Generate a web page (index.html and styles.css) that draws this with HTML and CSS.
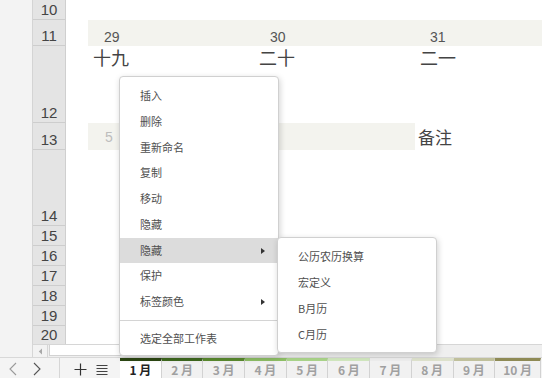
FILE: index.html
```html
<!DOCTYPE html>
<html lang="zh-CN">
<head>
    <meta charset="UTF-8">
    <title>月历</title>
    <link rel="stylesheet" href="styles.css">
</head>
<body>
    <div class="app">
        <div class="sheet">
            <div class="side"></div>
            <div class="main">
                <div class="grid">
                    <div class="heads">
                        <div class="rh h20">10</div>
                        <div class="rh h26">11</div>
                        <div class="rh h77">12</div>
                        <div class="rh h27">13</div>
                        <div class="rh h76">14</div>
                        <div class="rh h20">15</div>
                        <div class="rh h20">16</div>
                        <div class="rh h20">17</div>
                        <div class="rh h20">18</div>
                        <div class="rh h20">19</div>
                        <div class="rh h18 last">20</div>
                    </div>
                    <div class="cells">
                        <!-- row 11: day numbers -->
                        <div class="day band c2 r2">29</div>
                        <div class="day band c3 r2">30</div>
                        <div class="day band c4 r2">31</div>
                        <!-- row 12: lunar -->
                        <div class="lunar c2 r3">十九</div>
                        <div class="lunar c3 r3">二十</div>
                        <div class="lunar c4 r3">二一</div>
                        <!-- row 13 -->
                        <div class="note-num band c23 r4">5</div>
                        <div class="note c4 r4">备注</div>
                    </div>
                </div>
                <div class="hscroll">
                    <div class="sb-btn">
                        <svg width="5" height="7" viewBox="0 0 5 7"><path d="M4 0.5 L0.8 3.5 L4 6.5 Z" fill="#a8a8a8"/></svg>
                    </div>
                    <div class="sb-thumb"></div>
                    <div class="sb-track"></div>
                </div>
            </div>
        </div>

        <div class="tabbar">
            <div class="nav">
                <svg width="10" height="14" viewBox="0 0 10 14"><path d="M8 1 L2 7 L8 13" fill="none" stroke="#9a9a9a" stroke-width="1.1"/></svg>
                <svg width="10" height="14" viewBox="0 0 10 14"><path d="M2 1 L8 7 L2 13" fill="none" stroke="#555" stroke-width="1.1"/></svg>
            </div>
            <div class="tools">
                <svg width="13" height="13" viewBox="0 0 13 13"><path d="M6.5 0.5 V12.5 M0.5 6.5 H12.5" stroke="#333" stroke-width="1.2"/></svg>
                <svg width="12" height="12" viewBox="0 0 12 12"><path d="M0.5 1.5 H11.5 M0.5 4.5 H11.5 M0.5 7.5 H11.5 M0.5 10.5 H11.5" stroke="#444" stroke-width="1"/></svg>
            </div>
            <div class="tabs">
                <div class="tab active t1">1 月</div>
                <div class="tab t2">2 月</div>
                <div class="tab t3">3 月</div>
                <div class="tab t4">4 月</div>
                <div class="tab t5">5 月</div>
                <div class="tab t6">6 月</div>
                <div class="tab t7">7 月</div>
                <div class="tab t8">8 月</div>
                <div class="tab t9">9 月</div>
                <div class="tab t10">10 月</div>
            </div>
        </div>

        <div class="menu">
            <div class="item">插入</div>
            <div class="item">删除</div>
            <div class="item">重新命名</div>
            <div class="item">复制</div>
            <div class="item">移动</div>
            <div class="item">隐藏</div>
            <div class="item hover sub">隐藏</div>
            <div class="item">保护</div>
            <div class="item sub">标签颜色</div>
            <div class="sep"></div>
            <div class="item">选定全部工作表</div>
        </div>

        <div class="submenu">
            <div class="item">公历农历换算</div>
            <div class="item">宏定义</div>
            <div class="item">B月历</div>
            <div class="item">C月历</div>
        </div>
    </div>
</body>
</html>
```

FILE: styles.css
```css
body {
    margin: 0;
    font-family: "Liberation Sans", "Noto Sans CJK SC", sans-serif;
    background: #fff;
    overflow: hidden;
}

.app {
    position: relative;
    width: 542px;
    height: 378px;
    overflow: hidden;
}

.sheet {
    display: flex;
    height: 357px;
}

.side {
    width: 32px;
    background: #f3f3f3;
}

.main {
    flex: 1;
    display: flex;
    flex-direction: column;
}

.grid {
    display: flex;
    height: 344px;
}

/* row headers */
.heads {
    width: 32px;
    background: #e4e4e4;
    border-left: 1px solid #d4d4d4;
    border-right: 1px solid #cfcfcf;
}

.rh {
    box-sizing: border-box;
    border-bottom: 1px solid #cdcdcd;
    display: flex;
    align-items: flex-end;
    justify-content: center;
    font-size: 15px;
    line-height: 19px;
    color: #444;
}

.rh.last { border-bottom: none; }

.h18 { height: 18px; }
.h20 { height: 20px; }
.h26 { height: 26px; }
.h27 { height: 27px; }
.h76 { height: 76px; }
.h77 { height: 77px; }

/* cells */
.cells {
    flex: 1;
    display: grid;
    grid-template-columns: 22px 166px 161px 1fr;
    grid-template-rows: 20px 26px 77px 27px 76px repeat(5, 20px) 18px;
}

.c2 { grid-column: 2; }
.c3 { grid-column: 3; }
.c4 { grid-column: 4; }
.c23 { grid-column: 2 / 4; }
.r2 { grid-row: 2; }
.r3 { grid-row: 3; }
.r4 { grid-row: 4; }

.band {
    background: #f3f3ee;
}

.day {
    display: flex;
    align-items: flex-end;
    padding-left: 16px;
    font-size: 14px;
    line-height: 18px;
    color: #555;
}

.c4.day { padding-left: 15px; }

.lunar {
    padding-left: 5px;
    font-family: "Noto Sans CJK SC", sans-serif;
    font-size: 18px;
    line-height: 22px;
    color: #444;
}

.note-num {
    display: flex;
    align-items: center;
    padding-left: 17px;
    font-size: 14px;
    color: #bdbdbd;
}

.note {
    display: flex;
    align-items: center;
    padding-left: 3px;
    font-family: "Noto Sans CJK SC", sans-serif;
    font-size: 17px;
    color: #444;
}

/* horizontal scrollbar */
.hscroll {
    height: 13px;
    display: flex;
    background: #efefef;
    border-top: 1px solid #d6d6d6;
    box-sizing: border-box;
}

.sb-btn {
    width: 14px;
    display: flex;
    align-items: center;
    justify-content: center;
    background: #f2f2f2;
    border-left: 1px solid #d6d6d6;
    border-right: 1px solid #d6d6d6;
}

.sb-thumb {
    width: 80px;
    margin: 0 0 1px 1px;
    background: #fff;
    border: 1px solid #d2d2d2;
    border-top: none;
}

.sb-track { flex: 1; }

/* sheet tabs */
.tabbar {
    display: flex;
    height: 21px;
    background: #f4f4f4;
    border-top: 1px solid #d8d8d8;
    box-sizing: border-box;
}

.nav {
    width: 60px;
    display: flex;
    align-items: center;
    gap: 14px;
    padding-left: 8px;
    padding-top: 2px;
    box-sizing: border-box;
    border-right: 1px solid #d6d6d6;
}

.tools {
    width: 60px;
    display: flex;
    align-items: center;
    justify-content: center;
    gap: 9px;
    padding-top: 3px;
    padding-left: 2px;
    box-sizing: border-box;
}

.tabs {
    flex: 1;
    display: flex;
}

.tab {
    width: 41.7px;
    flex: none;
    box-sizing: border-box;
    border-top: 3px solid #e0e0e0;
    border-right: 1px solid #d2d2d2;
    background: #f1f1f1;
    color: #a0a0a0;
    font-size: 12px;
    font-weight: bold;
    text-align: center;
    line-height: 17px;
    font-family: "Noto Sans CJK SC", sans-serif;
}

.tab.active {
    background: #fff;
    color: #222;
}

.t1 { border-top-color: #2c4713; }
.t2 { border-top-color: #3f6a1f; }
.t3 { border-top-color: #5b8c2f; }
.t4 { border-top-color: #8fc066; }
.t5 { border-top-color: #a9d389; }
.t6 { border-top-color: #d0e6be; }
.t7 { border-top-color: #ececec; }
.t8 { border-top-color: #dde1cc; }
.t9 { border-top-color: #c0c09c; }
.t10 { border-top-color: #8e8a55; width: 46px; }

/* context menus */
.menu,
.submenu {
    position: absolute;
    background: #fff;
    border: 1px solid #d0d0d0;
    border-radius: 4px;
    box-shadow: 1px 2px 6px rgba(0, 0, 0, 0.18);
    font-family: "Noto Sans CJK SC", sans-serif;
    font-size: 11px;
    color: #505050;
    box-sizing: border-box;
}

.menu {
    left: 119px;
    top: 76px;
    width: 160px;
    height: 280px;
    padding-top: 6px;
}

.menu .item {
    height: 25.75px;
    line-height: 25.75px;
    padding-left: 20px;
    position: relative;
}

.menu .item.hover {
    background: #dcdcdc;
}

.menu .item.sub::after {
    content: "";
    position: absolute;
    right: 13px;
    top: 10px;
    border-left: 4px solid #333;
    border-top: 3px solid transparent;
    border-bottom: 3px solid transparent;
}

.sep {
    height: 1px;
    background: #d4d4d4;
    margin: 5px 0 5px;
}

.submenu {
    left: 277px;
    top: 237px;
    width: 160px;
    height: 116px;
    padding-top: 5px;
}

.submenu .item {
    height: 26px;
    line-height: 26px;
    padding-left: 20px;
}
```
